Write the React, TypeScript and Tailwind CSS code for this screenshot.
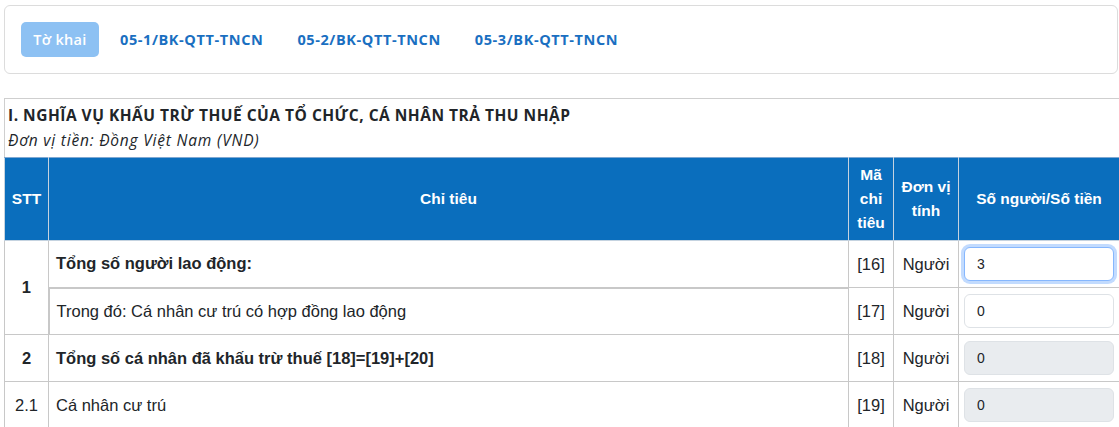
import type { ReactNode } from "react";

type Row = {
  stt?: string;
  sttBold?: boolean;
  sttRowSpan?: number;
  label: string;
  bold?: boolean;
  code: string;
  unit: string;
  value: string;
  focused?: boolean;
  disabled?: boolean;
};

const ROWS: Row[] = [
  {
    stt: "1",
    sttBold: true,
    sttRowSpan: 2,
    label: "Tổng số người lao động:",
    bold: true,
    code: "[16]",
    unit: "Người",
    value: "3",
    focused: true,
  },
  {
    label: "Trong đó: Cá nhân cư trú có hợp đồng lao động",
    code: "[17]",
    unit: "Người",
    value: "0",
  },
  {
    stt: "2",
    sttBold: true,
    label: "Tổng số cá nhân đã khấu trừ thuế [18]=[19]+[20]",
    bold: true,
    code: "[18]",
    unit: "Người",
    value: "0",
    disabled: true,
  },
  {
    stt: "2.1",
    label: "Cá nhân cư trú",
    code: "[19]",
    unit: "Người",
    value: "0",
    disabled: true,
  },
];

const TABS = ["05-1/BK-QTT-TNCN", "05-2/BK-QTT-TNCN", "05-3/BK-QTT-TNCN"];

function HeadCell({ children }: { children: ReactNode }) {
  return (
    <th className="border border-[#c5d3e0] border-t-[#7fa8d2] px-[6px] py-[5px] text-center align-middle text-[15.5px] font-bold leading-6 text-white">
      {children}
    </th>
  );
}

export default function App() {
  return (
    <div className="min-h-screen bg-white pl-[4px] pt-[5px] font-['Liberation_Sans',sans-serif] text-[#212529]">
      <nav className="mr-[1px] flex h-[69px] items-center rounded-[6px] border border-[#dcdcdc] pl-[16px] font-['Open_Sans',sans-serif]">
        <button
          type="button"
          className="h-[35px] w-[78px] rounded-[5px] bg-[#8dc1f3] text-[14.5px] font-semibold tracking-[0.3px] text-white"
        >
          Tờ khai
        </button>
        <div className="ml-[21px] flex gap-[34px]">
          {TABS.map((tab) => (
            <a key={tab} className="text-[14.5px] font-bold tracking-[0.6px] text-[#1a6fc1]">
              {tab}
            </a>
          ))}
        </div>
      </nav>

      <section className="mt-[24px]">
        <div className="border-l border-t border-[#cfcfcf] px-[3px] pb-[4px] pt-[4px] font-['Open_Sans',sans-serif] leading-[25px]">
          <h2 className="text-[15.5px] font-bold uppercase tracking-[0.5px]">
            I. Nghĩa vụ khấu trừ thuế của tổ chức, cá nhân trả thu nhập
          </h2>
          <p className="text-[15.5px] italic tracking-[0.8px]">Đơn vị tiền: Đồng Việt Nam (VND)</p>
        </div>

        <table className="w-[1116px] table-fixed border-collapse">
          <colgroup>
            <col className="w-[44px]" />
            <col className="w-[800px]" />
            <col className="w-[45px]" />
            <col className="w-[65px]" />
            <col />
          </colgroup>
          <thead className="bg-[#0a6ebd]">
            <tr>
              <HeadCell>STT</HeadCell>
              <HeadCell>Chỉ tiêu</HeadCell>
              <HeadCell>Mã chỉ tiêu</HeadCell>
              <HeadCell>Đơn vị tính</HeadCell>
              <HeadCell>Số người/Số tiền</HeadCell>
            </tr>
          </thead>
          <tbody className="text-[16.5px]">
            {ROWS.map((row) => (
              <tr key={row.code} className="h-[47px]">
                {row.stt !== undefined ? (
                  <td
                    rowSpan={row.sttRowSpan}
                    className={`border border-[#c8c8c8] text-center ${row.sttBold ? "font-bold" : ""}`}
                  >
                    {row.stt}
                  </td>
                ) : null}
                <td
                  className={`border border-[#c8c8c8] px-[7px] ${row.bold ? "font-bold" : ""} ${row.stt === undefined ? "border-l-2 border-t-2" : ""}`}
                >
                  {row.label}
                </td>
                <td className="border border-[#c8c8c8] text-center">{row.code}</td>
                <td className="border border-[#c8c8c8] text-center">{row.unit}</td>
                <td className="border border-[#c8c8c8] px-[5px]">
                  <input
                    readOnly
                    value={row.value}
                    className={`h-[34px] w-full rounded-[6px] border px-[12px] text-[14px] text-[#212529] outline-none ${
                      row.focused
                        ? "border-[#86b7fe] shadow-[0_0_0_3px_rgba(13,110,253,0.25)]"
                        : "border-[#dee2e6]"
                    } ${row.disabled ? "bg-[#e9ecef]" : "bg-white"}`}
                  />
                </td>
              </tr>
            ))}
          </tbody>
        </table>
      </section>
    </div>
  );
}
